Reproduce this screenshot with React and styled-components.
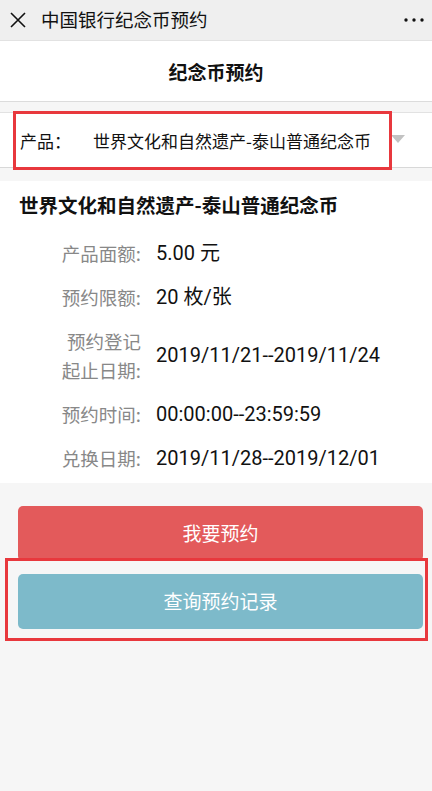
import React from 'react';
import styled, { createGlobalStyle } from 'styled-components';

const Global = createGlobalStyle`
  html, body { margin: 0; padding: 0; background: #f6f6f6; }
  body { font-family: "Noto Sans CJK SC", "Noto Sans", sans-serif; color: #111; }
  * { box-sizing: border-box; }
`;

const Page = styled.div`
  width: 432px;
  min-height: 791px;
  background: #f6f6f6;
  display: flex;
  flex-direction: column;
`;

const TopBar = styled.div`
  height: 41px;
  background: #efefef;
  border-bottom: 1px solid #e2e2e2;
  display: flex;
  align-items: center;
  padding: 0 8px 0 10px;
  gap: 15px;
`;

const TopTitle = styled.div`
  flex: 1;
  font-size: 18.5px;
  line-height: 1;
  color: #111;
  padding-bottom: 2px;
`;

const Header = styled.div`
  height: 61px;
  background: #fff;
  border-bottom: 1px solid #dcdcdc;
  display: flex;
  align-items: center;
  justify-content: center;
  font-size: 19px;
  font-weight: 700;
  color: #111;
`;

const SelectRow = styled.div`
  position: relative;
  margin-top: 10px;
  height: 56px;
  background: #fff;
  border-top: 1px solid #e2e2e2;
  border-bottom: 1px solid #d8d8d8;
  display: flex;
  align-items: center;
  padding-left: 20px;
  font-size: 17px;
  line-height: 1;
`;

const SelectLabel = styled.span`
  width: 73px;
  color: #111;
`;

const SelectValue = styled.span`
  flex: 1;
  color: #111;
`;

const Caret = styled.span`
  width: 0;
  height: 0;
  border-left: 7px solid transparent;
  border-right: 7px solid transparent;
  border-top: 8px solid #c2c2c2;
  margin-right: 27px;
  margin-top: -2px;
`;

const Highlight = styled.div`
  position: absolute;
  border: 3px solid #e8383d;
  pointer-events: none;
  top: ${p => p.$top}px;
  left: ${p => p.$left}px;
  width: ${p => p.$width}px;
  height: ${p => p.$height}px;
`;

const InfoPanel = styled.div`
  margin-top: 13px;
  background: #fff;
  padding: 11px 0 3px 0;
`;

const InfoTitle = styled.div`
  padding-left: 19px;
  font-size: 19.5px;
  font-weight: 700;
  line-height: 26px;
  margin-bottom: 13px;
`;

const Row = styled.div`
  display: grid;
  grid-template-columns: 141px 1fr;
  column-gap: 15px;
  align-items: center;
  padding: 7.5px 0;
`;

const Label = styled.div`
  text-align: right;
  color: #888;
  font-size: 18.5px;
  line-height: 29px;
`;

const Value = styled.div`
  color: #111;
  font-family: Roboto, "Noto Sans CJK SC", sans-serif;
  font-size: 20px;
  line-height: 29px;
`;

const ButtonArea = styled.div`
  position: relative;
  padding: 23px 9px 0 18px;
  display: flex;
  flex-direction: column;
  gap: 13px;
`;

const Button = styled.div`
  height: 55px;
  border-radius: 5px;
  background: ${p => p.$color};
  color: #fff;
  font-size: 19px;
  display: flex;
  align-items: center;
  justify-content: center;
  padding-bottom: 3px;
`;

const CloseIcon = () => (
  <svg width="16" height="16" viewBox="0 0 16 16">
    <path d="M1 1 L15 15 M15 1 L1 15" stroke="#111" strokeWidth="1.6" fill="none" />
  </svg>
);

const MoreIcon = () => (
  <svg width="20" height="6" viewBox="0 0 20 6">
    <circle cx="2" cy="3" r="1.7" fill="#111" />
    <circle cx="10" cy="3" r="1.7" fill="#111" />
    <circle cx="18" cy="3" r="1.7" fill="#111" />
  </svg>
);

const rows = [
  { label: '产品面额:', value: '5.00 元' },
  { label: '预约限额:', value: '20 枚/张' },
  { label: ['预约登记', '起止日期:'], value: '2019/11/21--2019/11/24' },
  { label: '预约时间:', value: '00:00:00--23:59:59' },
  { label: '兑换日期:', value: '2019/11/28--2019/12/01' },
];

export default function App() {
  return (
    <>
      <Global />
      <Page>
        <TopBar>
          <CloseIcon />
          <TopTitle>中国银行纪念币预约</TopTitle>
          <MoreIcon />
        </TopBar>
        <Header>纪念币预约</Header>
        <SelectRow>
          <SelectLabel>产品：</SelectLabel>
          <SelectValue>世界文化和自然遗产-泰山普通纪念币</SelectValue>
          <Caret />
          <Highlight $top={-2} $left={13} $width={379} $height={59} />
        </SelectRow>
        <InfoPanel>
          <InfoTitle>世界文化和自然遗产-泰山普通纪念币</InfoTitle>
          {rows.map((r, i) => (
            <Row key={i}>
              <Label>
                {Array.isArray(r.label)
                  ? r.label.map((l, j) => <div key={j}>{l}</div>)
                  : r.label}
              </Label>
              <Value>{r.value}</Value>
            </Row>
          ))}
        </InfoPanel>
        <ButtonArea>
          <Button $color="#e35a5b">我要预约</Button>
          <Button $color="#7dbaca">查询预约记录</Button>
          <Highlight $top={75} $left={5} $width={423} $height={83} />
        </ButtonArea>
      </Page>
    </>
  );
}
